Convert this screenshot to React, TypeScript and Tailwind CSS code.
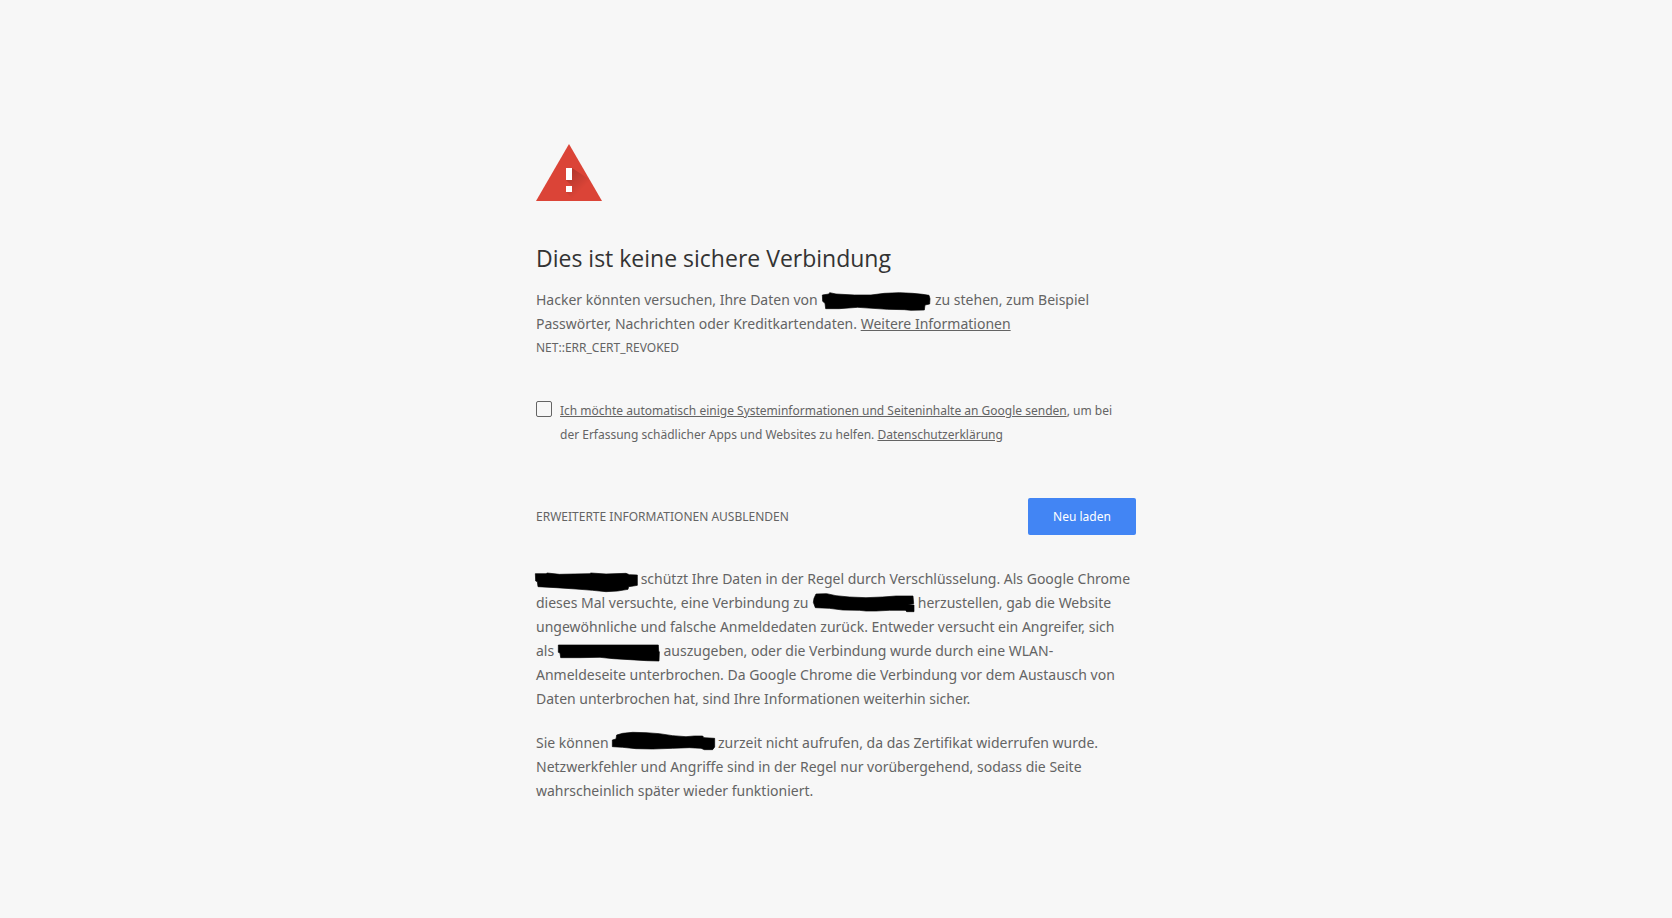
import React from 'react'

interface RedactionProps {
  viewBox: string
  points: string
  className: string
}

function Redaction({ viewBox, points, className }: RedactionProps) {
  return (
    <svg viewBox={viewBox} className={`inline-block h-6 overflow-visible align-top ${className}`} aria-hidden="true">
      <polygon points={points} fill="#000" stroke="#000" strokeWidth="2" strokeLinejoin="round" />
    </svg>
  )
}

function WarningIcon() {
  return (
    <svg viewBox="30 30 198 171" className="h-[57px] w-[66px]" aria-hidden="true">
      <defs>
        <linearGradient id="shade" x1="130" y1="120" x2="172" y2="162" gradientUnits="userSpaceOnUse">
          <stop offset="0" stopColor="#000" stopOpacity="0.18" />
          <stop offset="1" stopColor="#000" stopOpacity="0" />
        </linearGradient>
      </defs>
      <path d="M129 30 228 201H30z" fill="#db4437" />
      <path d="M138 102 190 136 228 201H147L120 174 138 156 120 138z" fill="url(#shade)" />
      <path d="M120 102h18v36h-18zM120 156h18v18h-18z" fill="#fff" />
    </svg>
  )
}

export default function App() {
  const [report, setReport] = React.useState(false)
  const [showDetails, setShowDetails] = React.useState(true)

  return (
    <div className="min-h-screen bg-[#f7f7f7] px-4 font-['Noto_Sans','Open_Sans',sans-serif] text-sm leading-6 text-[#646464]">
      <main className="mx-auto w-full max-w-[600px] pt-36 pb-12">
        <WarningIcon />

        <h1 className="mt-11 mb-4 font-['Open_Sans','Noto_Sans',sans-serif] text-[23px] leading-[27px] text-[#333]">
          Dies ist keine sichere Verbindung
        </h1>

        <p>
          Hacker könnten versuchen, Ihre Daten von{' '}
          <Redaction
            className="w-[110px]"
            viewBox="30 24 330 72"
            points="34,45 54,42 56,38 75,42 130,45 180,45 220,40 265,38 305,40 335,43 354,46 357,56 356,72 342,75 340,90 300,91 280,89 230,88 140,82 85,86 44,86 42,70 35,64"
          />{' '}
          zu stehen, zum Beispiel
          <br />
          Passwörter, Nachrichten oder Kreditkartendaten.{' '}
          <a href="#info" className="underline">Weitere Informationen</a>
        </p>
        <p className="text-xs leading-6">NET::ERR_CERT_REVOKED</p>

        <div className="mt-[39px] flex gap-2 text-xs leading-6">
          <input
            id="report"
            type="checkbox"
            checked={report}
            onChange={(e) => setReport(e.target.checked)}
            className="mt-0.5 size-4 shrink-0 appearance-none rounded-xs border border-[#646464] checked:bg-[#646464]"
          />
          <label htmlFor="report">
            <a href="#report-info" className="underline">
              Ich möchte automatisch einige Systeminformationen und Seiteninhalte an Google senden
            </a>
            , um bei
            <br />
            der Erfassung schädlicher Apps und Websites zu helfen.{' '}
            <a href="#privacy" className="underline">Datenschutzerklärung</a>
          </label>
        </div>

        <div className="mt-[51px] flex items-center justify-between text-xs">
          <button type="button" className="uppercase" onClick={() => setShowDetails(!showDetails)}>
            Erweiterte Informationen {showDetails ? 'ausblenden' : 'einblenden'}
          </button>
          <button type="button" className="h-[37px] w-[108px] rounded-xs bg-[#4285f4] text-white">
            Neu laden
          </button>
        </div>

        {showDetails && (
          <div className="mt-8 space-y-5">
            <p>
              <Redaction
                className="w-[101px]"
                viewBox="30 18 303 72"
                points="28,38 60,38 64,36 100,40 190,38 195,36 240,39 300,37 310,41 334,42 334,73 322,75 308,77 306,85 275,90 240,92 200,88 150,84 90,80 36,77 34,62 29,60"
              />{' '}
              schützt Ihre Daten in der Regel durch Verschlüsselung. Als Google Chrome
              <br />
              dieses Mal versuchte, eine Verbindung zu{' '}
              <Redaction
                className="w-[102px]"
                viewBox="38 90 306 72"
                points="50,99 82,98 110,104 150,108 200,110 250,108 290,105 341,105 343,128 325,131 344,132 344,152 322,152 318,148 270,148 230,150 200,150 180,148 130,147 90,142 48,140 42,124 44,112"
              />{' '}
              herzustellen, gab die Website
              <br />
              ungewöhnliche und falsche Anmeldedaten zurück. Entweder versucht ein Angreifer, sich
              <br />
              als{' '}
              <Redaction
                className="w-[102px]"
                viewBox="94 234 306 72"
                points="95,252 395,252 396,270 398,272 397,300 360,299 310,296 260,293 220,289 160,290 102,290 100,276 95,274"
              />{' '}
              auszugeben, oder die Verbindung wurde durch eine WLAN-
              <br />
              Anmeldeseite unterbrochen. Da Google Chrome die Verbindung vor dem Austausch von
              <br />
              Daten unterbrochen hat, sind Ihre Informationen weiterhin sicher.
            </p>
            <p>
              Sie können{' '}
              <Redaction
                className="w-[102px]"
                viewBox="258 30 306 72"
                points="259,57 270,54 272,42 290,37 320,34 360,35 400,38 440,44 480,47 505,45 530,45 534,50 566,52 566,78 560,86 535,86 525,82 490,80 440,82 380,84 330,83 290,79 259,77"
              />{' '}
              zurzeit nicht aufrufen, da das Zertifikat widerrufen wurde.
              <br />
              Netzwerkfehler und Angriffe sind in der Regel nur vorübergehend, sodass die Seite
              <br />
              wahrscheinlich später wieder funktioniert.
            </p>
          </div>
        )}
      </main>
    </div>
  )
}
